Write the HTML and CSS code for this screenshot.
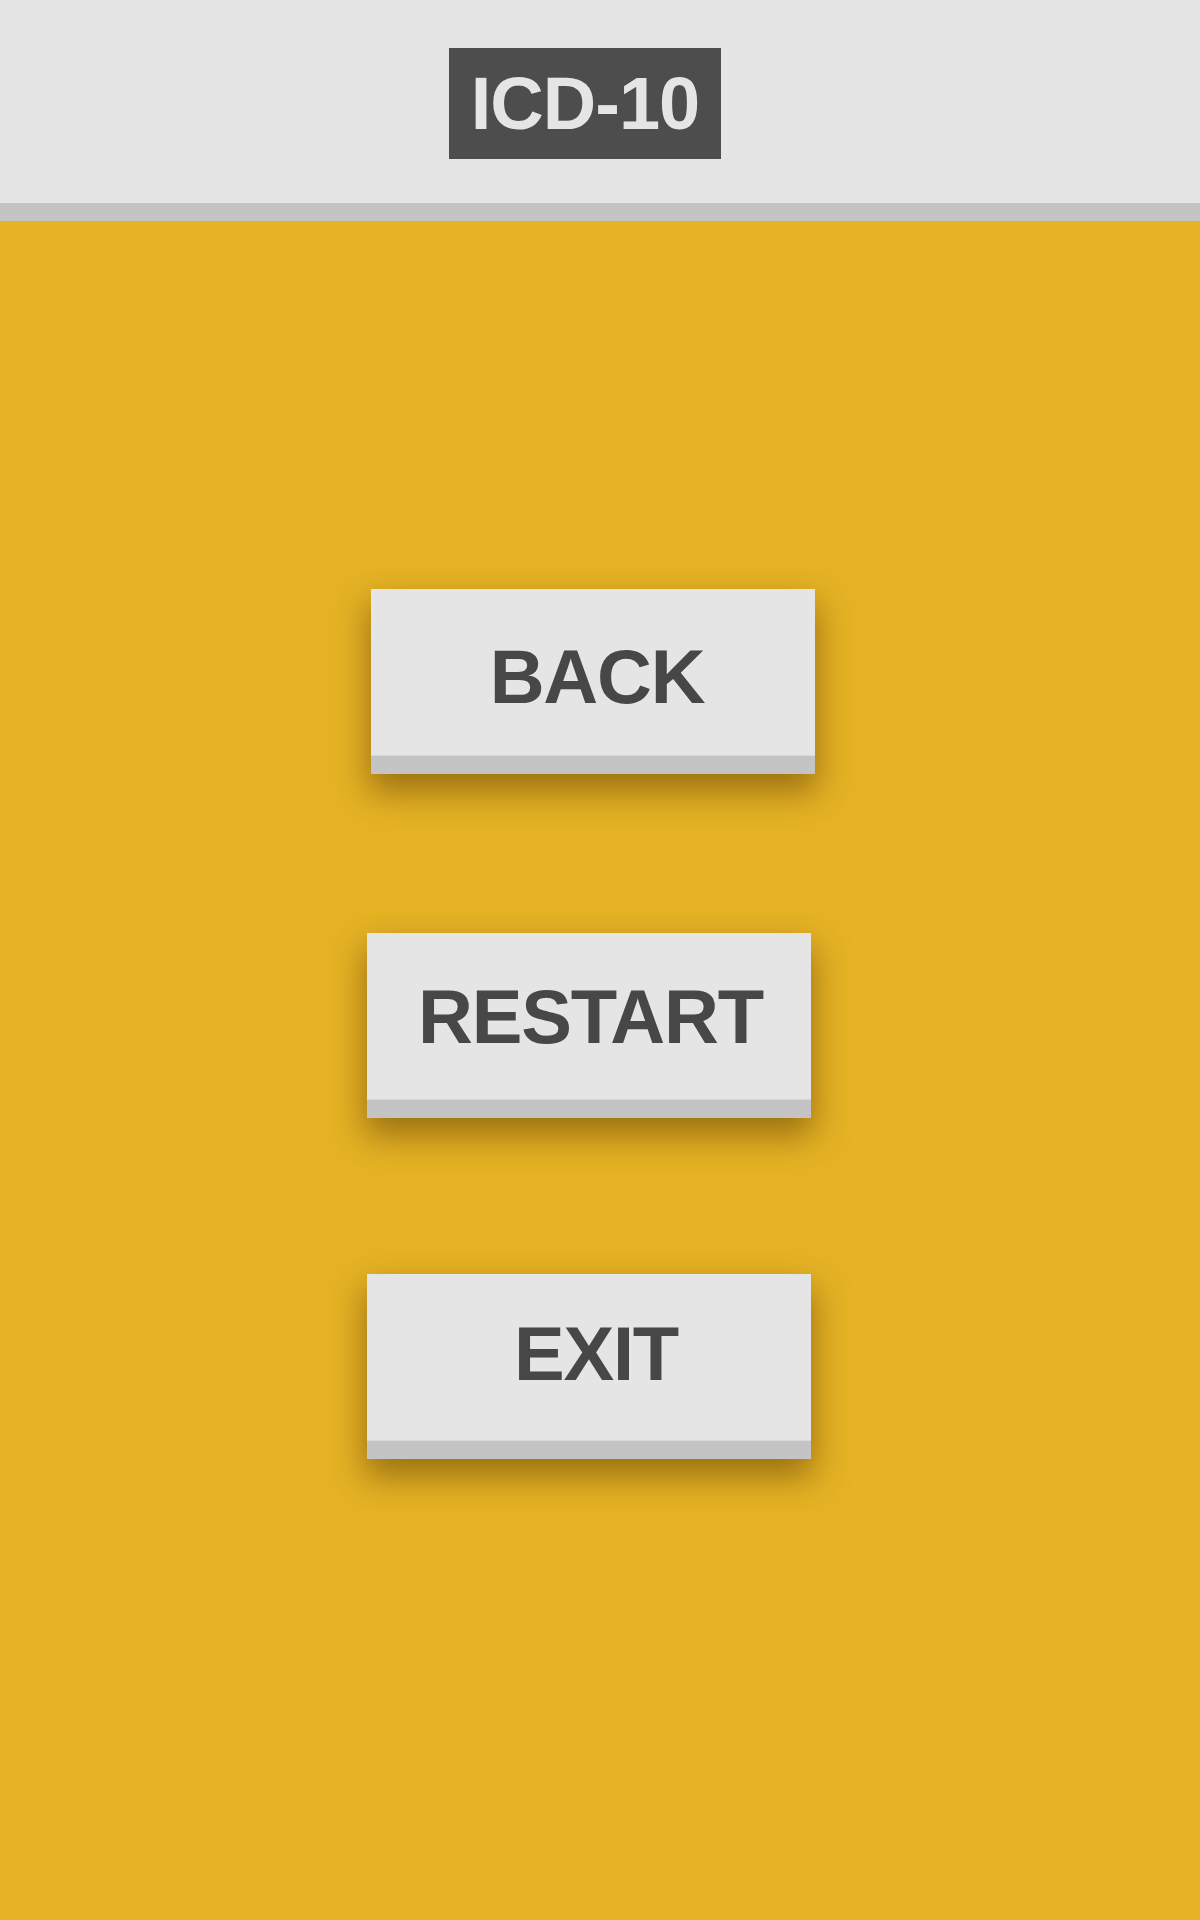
FILE: index.html
```html
<!DOCTYPE html>
<html>
<head>
<meta charset="utf-8">
<link rel="stylesheet" href="styles.css">
</head>
<body>
<header class="header">
  <div class="logo">ICD-10</div>
</header>
<main class="main">
  <div class="btn btn-back">BACK</div>
  <div class="btn btn-restart">RESTART</div>
  <div class="btn btn-exit">EXIT</div>
</main>
</body>
</html>
```

FILE: styles.css
```css
html, body {
  margin: 0;
  padding: 0;
}
body {
  width: 1200px;
  height: 1920px;
  background: #e6b324;
  font-family: "Liberation Sans", Arial, sans-serif;
  font-weight: bold;
  overflow: hidden;
}
.header {
  height: 203px;
  background: #e5e5e5;
  border-bottom: 18px solid #c4c4c4;
  box-sizing: content-box;
  display: flex;
  justify-content: center;
  align-items: flex-start;
}
.logo {
  margin-top: 48px;
  margin-left: -30px;
  width: 272px;
  height: 111px;
  background: #4d4d4d;
  color: #e5e5e5;
  font-size: 74px;
  line-height: 111px;
  letter-spacing: -1px;
  text-align: center;
}
.main {
  display: flex;
  flex-direction: column;
  align-items: center;
  padding-top: 368px;
}
.btn {
  width: 444px;
  height: 167px;
  background: #e5e5e5;
  border-bottom: 18px solid #c4c4c4;
  box-shadow: 0 16px 32px 2px rgba(80, 50, 0, 0.5);
  color: #474747;
  font-size: 76px;
  line-height: 76px;
  letter-spacing: -1.2px;
  display: flex;
  align-items: center;
  justify-content: center;
  box-sizing: content-box;
  position: relative;
}
.btn::after {
  content: "";
  position: absolute;
  left: 0;
  right: 0;
  bottom: 0;
  height: 1px;
  background: #d9d9d9;
}
.btn-back {
  margin-left: -14px;
  padding-top: 8px;
  height: 159px;
  text-indent: 8px;
}
.btn-restart {
  margin-top: 159px;
  margin-left: -22px;
  text-indent: 3px;
}
.btn-exit {
  margin-top: 156px;
  margin-left: -22px;
  padding-bottom: 8px;
  height: 159px;
  text-indent: 14px;
}
```
